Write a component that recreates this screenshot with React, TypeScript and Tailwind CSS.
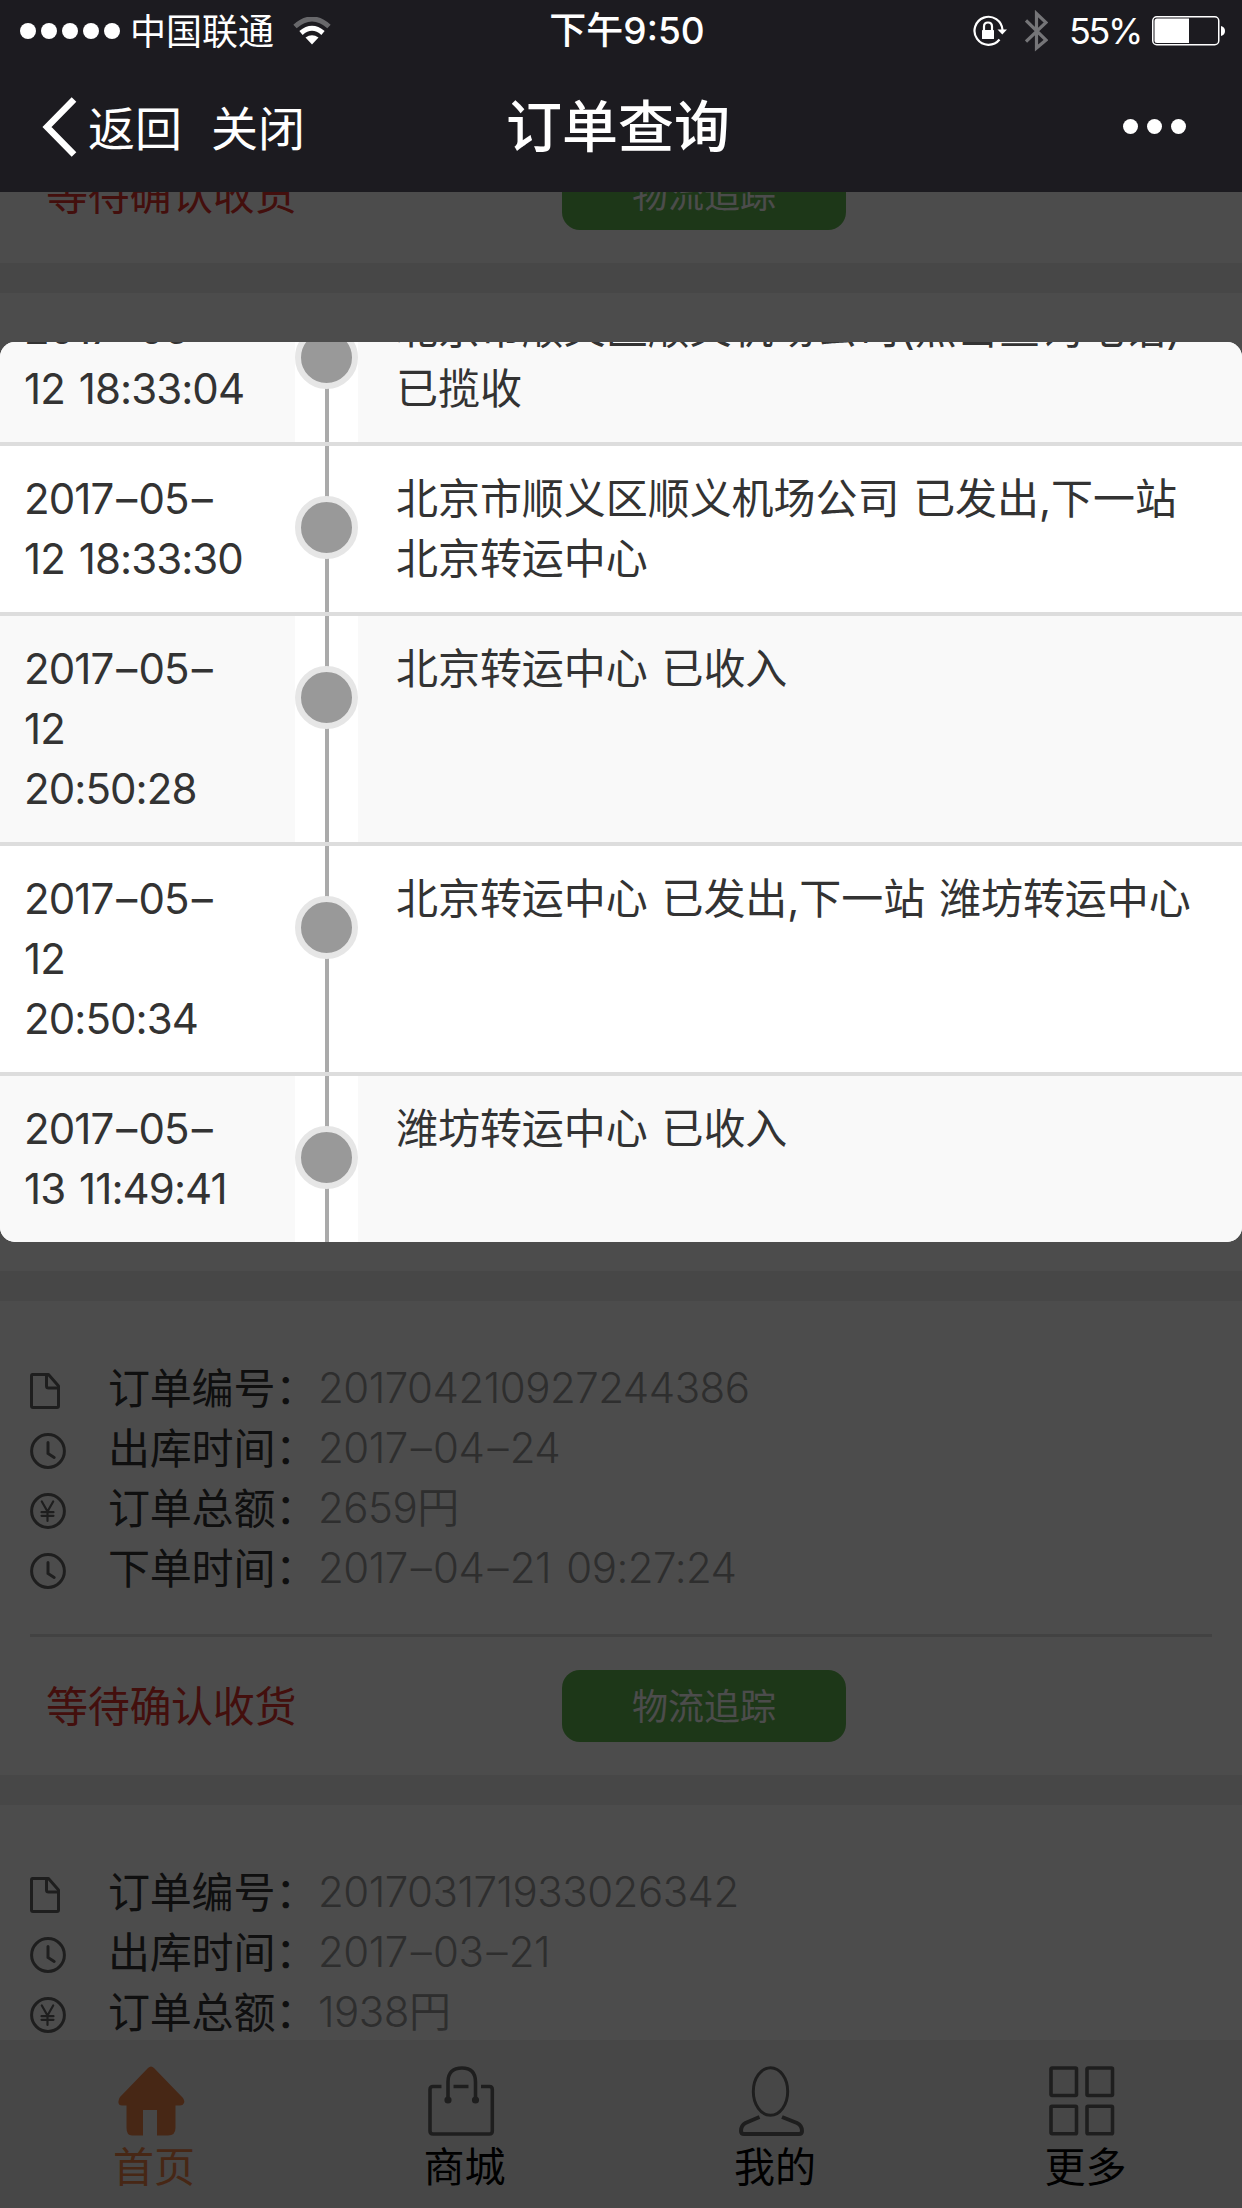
import { Fragment } from 'react';
import type { ReactNode } from 'react';
import clsx from 'clsx';

type Order = {
  id: string;
  shippedAt: string;
  total: string;
  orderedAt?: string;
};

type Track = {
  time: string[];
  text: string[];
};

const orders: Order[] = [
  { id: '201704210927244386', shippedAt: '2017–04–24', total: '2659円', orderedAt: '2017–04–21 09:27:24' },
  { id: '201703171933026342', shippedAt: '2017–03–21', total: '1938円' },
];

const tracks: Track[] = [
  { time: ['2017–05–', '12 18:33:04'], text: ['北京市顺义区顺义机场公司(点击查询电话)', '已揽收'] },
  { time: ['2017–05–', '12 18:33:30'], text: ['北京市顺义区顺义机场公司 已发出,下一站', '北京转运中心'] },
  { time: ['2017–05–', '12', '20:50:28'], text: ['北京转运中心 已收入'] },
  { time: ['2017–05–', '12', '20:50:34'], text: ['北京转运中心 已发出,下一站 潍坊转运中心'] },
  { time: ['2017–05–', '13 11:49:41'], text: ['潍坊转运中心 已收入'] },
];

function DocIcon() {
  return (
    <svg width="36" height="36" viewBox="0 0 36 36" fill="none" stroke="#666" strokeWidth="3" strokeLinejoin="round">
      <path d="M2.5 1.5H18.5L28.5 13V33Q28.5 34.5 27 34.5H3Q1.5 34.5 1.5 33V3Q1.5 1.5 2.5 1.5Z" />
      <path d="M16.5 1.5V13Q16.5 15 18.5 15H28.5" />
    </svg>
  );
}

function ClockIcon() {
  return (
    <svg width="36" height="36" viewBox="0 0 36 36" fill="none" stroke="#666" strokeWidth="3" strokeLinecap="round">
      <circle cx="18" cy="18" r="16.4" />
      <path d="M18 9.5V20.5L24.2 24.5" />
    </svg>
  );
}

function YenIcon() {
  return (
    <svg width="36" height="36" viewBox="0 0 36 36" fill="none" stroke="#666" strokeLinecap="round">
      <circle cx="18" cy="18" r="16.4" strokeWidth="3" />
      <path d="M11.8 8.5L17.5 18.5L23.2 8.5M17.5 18.5V28M11.5 19.2H23.5M11.5 22.8H23.5" strokeWidth="2.2" />
    </svg>
  );
}

function StatusBar() {
  return (
    <div className="flex h-[62px] items-center pr-4 pl-5 text-4xl">
      <div className="flex flex-1 items-center">
        <div className="flex gap-[5px]">
          {[0, 1, 2, 3, 4].map((i) => (
            <span key={i} className="size-4 rounded-full bg-white" />
          ))}
        </div>
        <span className="ml-[10px] pt-px leading-[62px]">中国联通</span>
        <svg className="ml-[19px]" width="38" height="28" viewBox="0 0 38 28" fill="none">
          <path d="M2 9.5Q19 -5.5 36 9.5" stroke="#68686b" strokeWidth="5" />
          <path d="M8 16Q19 6.5 30 16" stroke="#fff" strokeWidth="5" />
          <path d="M12.5 20.5Q19 16 25.5 20.5L19 27.5Z" fill="#fff" />
        </svg>
      </div>
      <span className="pl-2 text-[37px] leading-[64px] font-medium">下午9:50</span>
      <div className="flex flex-1 items-center justify-end">
        <svg width="34" height="32" viewBox="0 0 34 32" fill="none">
          <path d="M26.5 24.5A14 14 0 1 1 29.5 15" stroke="#fff" strokeWidth="2.2" />
          <path d="M24.5 14.5H34L29.3 19.5Z" fill="#fff" />
          <rect x="9" y="15" width="12" height="9" rx="0.5" fill="#fff" />
          <path d="M11 15V11.5Q11 7.5 15 7.5Q19 7.5 19 11.5V15" stroke="#fff" strokeWidth="2.2" />
        </svg>
        <svg className="ml-[18px]" width="23" height="42" viewBox="0 0 23 42" fill="none" stroke="#757578" strokeWidth="3.2">
          <path d="M1 10.5L21 30L11.5 38V3.5L21 12.5L1 31.5" />
        </svg>
        <span className="ml-[21px] leading-[62px] tracking-[-0.065em]">55%</span>
        <svg className="ml-[11px]" width="74" height="30" viewBox="0 0 74 30" fill="none">
          <rect x="0.75" y="0.75" width="66" height="28" rx="4" stroke="#fff" strokeWidth="1.5" />
          <path d="M2.5 5Q2.5 2.5 5 2.5H37V27H5Q2.5 27 2.5 24.5Z" fill="#fff" />
          <path d="M69 10Q73 11 73 15Q73 19 69 20Z" fill="#fff" />
        </svg>
      </div>
    </div>
  );
}

function NavBar() {
  return (
    <div className="grid h-[130px] grid-cols-3 items-center pr-12 pl-[42px]">
      <div className="flex items-center text-[47px]">
        <svg width="36" height="60" viewBox="0 0 36 60" fill="none" stroke="#fff" strokeWidth="6.5">
          <path d="M32 2.5L5 30L32 57.5" />
        </svg>
        <span className="ml-[10px] pt-[3px]">返回</span>
        <span className="ml-[29px] pt-[3px]">关闭</span>
      </div>
      <h1 className="text-center text-[56px] leading-[128px] font-medium whitespace-nowrap">订单查询</h1>
      <div className="mr-2 mb-0.5 flex justify-end gap-[9px]">
        <span className="size-[15px] rounded-full bg-white" />
        <span className="size-[15px] rounded-full bg-white" />
        <span className="size-[15px] rounded-full bg-white" />
      </div>
    </div>
  );
}

// 日期里的横线两侧留一点空隙
function DateText({ value }: { value: string }) {
  return (
    <>
      {value.split('–').map((part, i) => (
        <Fragment key={i}>
          {i > 0 && <span className="ml-[3px] tracking-[0.03em]">–</span>}
          {part}
        </Fragment>
      ))}
    </>
  );
}

function OrderField({ icon, label, value }: { icon: ReactNode; label: string; value: string }) {
  return (
    <li className="flex h-[60px] items-center whitespace-nowrap">
      <span className="w-[78px] shrink-0 pt-1.5">{icon}</span>
      <span className="w-[210px] shrink-0 pt-px tracking-[-0.2px] text-[#333]">{label}：</span>
      <span className="font-[350] tracking-[-0.012em] text-[#999] [word-spacing:4px]">
        <DateText value={value} />
      </span>
    </li>
  );
}

function OrderFooter() {
  return (
    <div className="flex items-center border-t-3 border-[#dcdcdc] pt-[33px] pl-4">
      <span className="w-[516px] pt-0.5 tracking-[-0.3px] text-[#e2332c]">等待确认收货</span>
      <button className="h-[72px] w-[284px] rounded-[18px] bg-[#61b750] pt-px text-4xl text-white">物流追踪</button>
    </div>
  );
}

function OrderCard({ order }: { order: Order }) {
  return (
    <article className="h-[474px] shrink-0 bg-white px-[30px] pt-[57px]">
      <ul className="h-[276px]">
        <OrderField icon={<DocIcon />} label="订单编号" value={order.id} />
        <OrderField icon={<ClockIcon />} label="出库时间" value={order.shippedAt} />
        <OrderField icon={<YenIcon />} label="订单总额" value={order.total} />
        {order.orderedAt && <OrderField icon={<ClockIcon />} label="下单时间" value={order.orderedAt} />}
      </ul>
      {order.orderedAt && <OrderFooter />}
    </article>
  );
}

function TrackRow({ track, striped }: { track: Track; striped: boolean }) {
  return (
    <li className={clsx('flex shrink-0 border-t-4 border-[#ddd]', striped ? 'bg-[#f9f9f9]' : 'bg-white')}>
      <div className="w-[295px] py-[23px] pl-6 font-[370] tracking-[-0.022em] [word-spacing:3px]">
        {track.time.map((line) => (
          <p key={line}>
            <DateText value={line} />
          </p>
        ))}
      </div>
      <div className="relative flex w-[63px] justify-center bg-white">
        <span className="w-1 bg-[#aaa]" />
        <span className="absolute top-[50px] left-0 size-[63px] rounded-full border-[6px] border-[#e6e6e6] bg-[#999]" />
      </div>
      <div className="flex-1 py-[23px] pl-[38px] tracking-[-0.05px] whitespace-nowrap [word-spacing:2px]">
        {track.text.map((line) => (
          <p key={line}>{line}</p>
        ))}
      </div>
    </li>
  );
}

function TabItem({ label, active, children }: { label: string; active?: boolean; children: ReactNode }) {
  return (
    <div className={clsx('flex flex-1 flex-col pt-[26px] pl-[113px]', active ? 'text-[#ed8249]' : 'text-black')}>
      <svg className="ml-[4.5px]" width="68" height="70" viewBox="0 0 68 70" fill="none" stroke="#666" strokeWidth="3.6">
        {children}
      </svg>
      <span className="text-[41px] leading-[62px]">{label}</span>
    </div>
  );
}

function TabBar() {
  return (
    <nav className="flex h-[168px] bg-[#eee]">
      <TabItem label="首页" active>
        <path
          d="M30 2Q33 -1 36 2L65 32Q67 35 66 37Q65 39.5 62 39.5H57.5V62Q57.5 69.5 50 69.5H39V44H25V69.5H14Q8.5 69.5 8.5 62V39.5H4Q1 39.5 0.5 37Q0 34 2 31Z"
          fill="#ed8249"
          stroke="none"
        />
      </TabItem>
      <TabItem label="商城">
        <path d="M13.5 20.5H5Q2 20.5 2 23.5V65Q2 68 5 68H61.5Q64.3 68 64.3 65V23.5Q64.3 20.5 61.5 20.5H53M25.5 20.5H40.5" />
        <path d="M20 34V16Q20 2 34 2Q47.5 2 47.5 16V34" />
        <circle cx="20" cy="34" r="2.6" fill="#666" strokeWidth="2" />
        <circle cx="47.5" cy="34" r="2.6" fill="#666" strokeWidth="2" />
      </TabItem>
      <TabItem label="我的">
        <ellipse cx="31.5" cy="25.5" rx="17.2" ry="23.8" strokeWidth="3" />
        <path d="M20.5 51L6.5 57Q2 59.5 2 65Q2 68 5 68H60Q63 68 63 65Q63 59.5 58 57L43 51" strokeWidth="4" />
      </TabItem>
      <TabItem label="更多">
        <rect x="2" y="2" width="25.5" height="27.5" rx="1" />
        <rect x="38" y="2" width="25.5" height="27.5" rx="1" />
        <rect x="2" y="40.3" width="25.5" height="27.5" rx="1" />
        <rect x="38" y="40.3" width="25.5" height="27.5" rx="1" />
      </TabItem>
    </nav>
  );
}

export default function App() {
  return (
    <div className="flex h-[2208px] w-[1242px] flex-col overflow-hidden font-[Inter,'Noto_Sans_CJK_SC',sans-serif] text-[42px] leading-[60px]">
      <header className="h-48 shrink-0 bg-[#1c1b20] text-white">
        <StatusBar />
        <NavBar />
      </header>
      <div className="relative flex min-h-0 flex-1 flex-col">
        <main className="flex min-h-0 flex-1 flex-col gap-[30px] overflow-hidden bg-[#eee]">
          {/* 第一单只露出底部 */}
          <article className="-mt-[70px] h-[141px] shrink-0 bg-white px-[30px]">
            <OrderFooter />
          </article>
          {/* 被弹层挡住的两单 */}
          <div className="h-[474px] shrink-0 bg-white" />
          <div className="h-[474px] shrink-0 bg-white" />
          {orders.map((order) => (
            <OrderCard key={order.id} order={order} />
          ))}
        </main>
        <TabBar />
        {/* 物流追踪弹层 */}
        <div className="absolute inset-0 bg-black/70 pt-[150px]">
          <section className="h-[900px] overflow-hidden rounded-[15px] bg-white text-[#333]">
            <ul className="-mt-[70px] flex flex-col">
              {tracks.map((track, i) => (
                <TrackRow key={track.time.join()} track={track} striped={i % 2 === 0} />
              ))}
            </ul>
          </section>
        </div>
      </div>
    </div>
  );
}
